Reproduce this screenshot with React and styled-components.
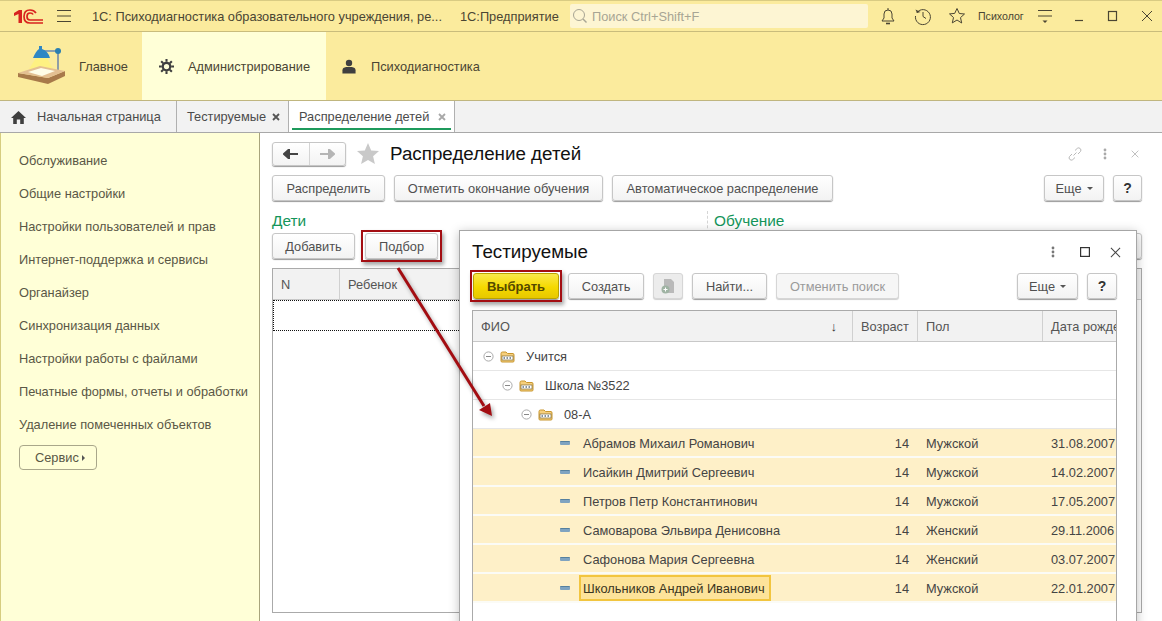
import React from "react";
import styled, { createGlobalStyle } from "styled-components";

const Global = createGlobalStyle`
  html, body { margin: 0; padding: 0; background: #fff; }
  body { font-family: "Liberation Sans", Arial, sans-serif; font-size: 12.8px; color: #4b4b4b; }
  * { box-sizing: border-box; }
`;

const Page = styled.div`
  width: 1162px; height: 621px; overflow: hidden; position: relative;
  display: flex; flex-direction: column; background: #fff;
`;

/* ---- top bar ---- */
const TopBar = styled.header`
  height: 32px; flex: none; display: flex; align-items: center;
  background: #fbeb9d; border-top: 1px solid #d9cb83; border-bottom: 1px solid #c9bc7c;
  color: #4a4533;
`;
const Logo = styled.svg`width: 32px; height: 20px; margin-left: 12px; flex: none;`;
const Burger = styled.svg`width: 18px; height: 16px; margin-left: 11px; flex: none;`;
const AppTitle = styled.span`margin-left: 19px; width: 355px; flex: none; white-space: nowrap; overflow: hidden; text-overflow: ellipsis;`;
const AppName = styled.span`margin-left: 13px; width: 97px; flex: none; white-space: nowrap;`;
const SearchBox = styled.div`
  margin-left: 13px; width: 298px; height: 24px; flex: none; border-radius: 2px; background: #fdf5d3;
  display: flex; align-items: center; gap: 4px; padding-left: 2px; color: #a8a594;
`;
const TopIcon = styled.svg`width: 20px; height: 20px; flex: none; margin-left: ${p => p.$gap}px;`;
const UserName = styled.span`margin-left: 11px; width: 47px; flex: none; font-size: 10.6px; white-space: nowrap;`;

/* ---- sections ---- */
const SectionBar = styled.nav`
  height: 69px; flex: none; display: flex; background: #fbeb9d; border-bottom: 1px solid #c0b67f;
`;
const Section = styled.div`
  display: flex; align-items: center; height: 100%; flex: none; width: ${p => p.$w}px;
  padding: 1px 0 0 ${p => p.$pad}px; gap: ${p => p.$gap}px;
  background: ${p => (p.$active ? "#ffffd7" : "transparent")}; color: #4a4533;
`;
const SectionIcon = styled.svg`flex: none; width: ${p => p.$w}px; height: ${p => p.$h}px;`;

/* ---- tabs ---- */
const TabBar = styled.div`
  height: 32px; flex: none; display: flex; background: #f2f2f2; border-bottom: 1px solid #a8a8a8;
`;
const Tab = styled.div`
  position: relative; height: 31px; flex: none; width: ${p => p.$w}px; display: flex; align-items: center;
  padding-left: ${p => p.$pad}px; border-right: 1px solid #b0b0b0; white-space: nowrap; color: #4b4b4b;
  background: ${p => (p.$current ? "#fff" : "transparent")};
  ${p => p.$current && `&::after { content: ""; position: absolute; left: 3px; right: 3px; bottom: 2px; height: 2px; background: #1e9a5c; }`}
`;
const TabClose = styled.svg`
  margin-left: auto; margin-right: 8px; width: 8px; height: 8px; flex: none;
  color: ${p => (p.$dim ? "#a8a8a8" : "#555")};
`;
const HomeIcon = styled.svg`width: 15px; height: 14px; margin-right: 11px; flex: none;`;

/* ---- workspace ---- */
const Body = styled.div`flex: 1; min-height: 0; display: flex;`;
const Sidebar = styled.aside`
  width: 260px; flex: none; background: #ffffd7; border-left: 1px solid #d6cd80; border-right: 1px solid #a8a47c;
  padding: 11px 0 0 18px; display: flex; flex-direction: column; align-items: flex-start;
`;
const SideItem = styled.div`height: 33px; line-height: 33px; color: #5a5746; white-space: nowrap;`;
const ServiceBtn = styled.div`
  margin-top: 4px; width: 78px; height: 25px; border: 1px solid #a9a78a; border-radius: 4px; color: #5a5746;
  display: flex; align-items: center; padding-left: 15px; gap: 3px;
  &::after { content: ""; border-left: 3px solid #555; border-top: 3px solid transparent; border-bottom: 3px solid transparent; }
`;
const Form = styled.main`
  flex: 1; min-width: 0; padding: 9px 20px 8px 12px; display: flex; flex-direction: column;
`;
const FormHead = styled.div`display: flex; align-items: center; height: 24px;`;
const NavGroup = styled.div`
  width: 74px; height: 24px; display: flex; border: 1px solid #c6c6c6; border-radius: 3px;
  box-shadow: 0 1px 1px #999; background: linear-gradient(#fff, #f3f3f3);
`;
const NavCell = styled.div`
  flex: 1; display: flex; align-items: center; justify-content: center;
  color: ${p => (p.$dim ? "#b5b5b5" : "#444")};
  & + & { border-left: 1px solid #d4d4d4; }
`;
const StarIcon = styled.svg`width: 24px; height: 24px; margin-left: 10px; flex: none;`;
const FormTitle = styled.h1`
  margin: 0 0 0 10px; font-size: 18.8px; font-weight: normal; color: #111; white-space: nowrap;
`;
const HeadTools = styled.div`margin-left: auto; display: flex; align-items: center; padding-right: 3px;`;
const LinkIcon = styled.svg`width: 16px; height: 16px; flex: none;`;
const ToolSlot = styled.div`display: flex; align-items: center; margin-left: ${p => p.$gap}px;`;
const Toolbar = styled.div`display: flex; align-items: center; gap: ${p => p.$gap || 9}px; flex: none;`;
const MainBar = styled(Toolbar)`margin-top: 9px;`;
const Spacer = styled.div`flex: 1;`;

const Btn = styled.button`
  position: relative; height: 26px; width: ${p => p.$w}px; flex: none; padding: 0; margin: 0;
  font: inherit; white-space: nowrap; border-radius: 3px;
  border: 1px solid ${p => (p.$disabled ? "#d6d6d6" : "#c6c6c6")};
  color: ${p => (p.$disabled ? "#9a9a9a" : "#505050")};
  background: linear-gradient(#ffffff, #f3f3f3);
  box-shadow: 0 1px 1px ${p => (p.$disabled ? "#cfcfcf" : "#9a9a9a")};
  ${p => p.$disabled && "background: #f6f6f6;"}
  display: flex; align-items: center; justify-content: center; gap: 5px;
`;
const DropMark = styled.i`
  border-top: 3px solid #555; border-left: 3px solid transparent; border-right: 3px solid transparent;
`;
const HelpBtn = styled(Btn)`font-weight: bold; font-size: 14px; color: #333;`;
const PrimaryBtn = styled(Btn)`
  font-weight: bold; font-size: 13px; color: #544800; border-color: #b9a300;
  background: linear-gradient(#f9e84a, #f5d900 55%, #e7c800);
`;
const Marked = styled.div`
  position: relative; flex: none; display: flex;
  &::after {
    content: ""; position: absolute; left: ${p => p.$x}px; right: ${p => p.$x}px; top: -3px; bottom: -3px;
    border: 2px solid #a30d12; pointer-events: none;
    box-shadow: 2px 3px 4px rgba(0, 0, 0, .35);
  }
`;

const Columns = styled.div`
  flex: 1; min-height: 0; display: grid; grid-template-columns: 442px 1fr; margin-top: 10px;
`;
const Column = styled.section`display: flex; flex-direction: column; min-width: 0;`;
const GroupHead = styled.div`
  height: 22px; font-size: 15.4px; line-height: 20px; color: #14955a;
  ${p => p.$divided && "border-left: 1px dashed #d5d5d5; padding-left: 6px; margin-left: -7px;"}
`;
const SubBar = styled(Toolbar)`margin-bottom: 9px;`;

const Grid = styled.div`
  flex: 1; min-height: 0; border: 1px solid #aaa; overflow: hidden; background: #fff;
`;
const HeadRow = styled.div`
  display: grid; grid-template-columns: ${p => p.$cols}; height: ${p => p.$h}px;
  background: #f2f2f2; border-bottom: 1px solid #c8c8c8;
`;
const HeadCell = styled.div`
  display: flex; align-items: center; padding-left: 8px; white-space: nowrap; overflow: hidden; color: #555;
  & + & { border-left: 1px solid #d0d0d0; }
`;
const SortMark = styled.span`margin-left: auto; margin-right: 15px; color: #333; font-size: 13px;`;
const CurrentRow = styled.div`height: 31px; border: 1px dotted #111;`;

/* ---- dialog ---- */
const Dialog = styled.div`
  position: absolute; left: 459px; top: 230px; width: 678px; height: 400px; background: #fff;
  border: 1px solid #a6a6a6; box-shadow: 0 2px 10px rgba(0, 0, 0, .25);
  padding: 0 19px 0 12px; display: flex; flex-direction: column;
`;
const DialogHead = styled.div`height: 42px; display: flex; align-items: center; flex: none;`;
const DialogTitle = styled.h2`margin: 0; font-size: 18.8px; font-weight: normal; color: #111;`;
const DialogTools = styled.div`margin-left: auto; margin-right: -4px; display: flex; align-items: center;`;
const DialogBar = styled(Toolbar)`padding-left: 1px;`;
const IconBtn = styled(Btn)`background: #ececec;`;
const TreeGrid = styled.div`
  margin-top: 11px; flex: 1; min-height: 0; border: 1px solid #aaa; border-bottom: none; overflow: hidden;
`;
const TreeRow = styled.div`
  display: grid; grid-template-columns: 379px 65px 125px 75px; height: 29px; align-items: center;
  padding-top: 1px;
  background: ${p => (p.$picked ? "#fef0c8" : "#fff")};
  border-bottom: ${p => (p.$picked ? "2px solid #fbfbf6" : "1px solid #e6e6e6")};
  color: #444; white-space: nowrap;
`;
const NameCell = styled.div`
  display: flex; align-items: center; height: 100%; padding-left: ${p => p.$indent}px;
`;
const Toggle = styled.svg`width: 11px; height: 11px; flex: none; margin-right: 6px;`;
const Folder = styled.svg`width: 15px; height: 12px; flex: none; margin-right: 11px;`;
const LeafMark = styled.span`
  width: 10px; height: 4px; flex: none; margin-right: 13px; background: #7fa3c0; border-top: 1px solid #55809f; border-radius: 1px;
`;
const CurrentName = styled.span`
  margin-left: -4px; height: 26px; width: 192px; padding-left: 2px; display: flex; align-items: center;
  background: #fde39a; border: 2px solid #f2c53f; color: #3a3520;
`;
const Age = styled.div`text-align: right; padding-right: 8px;`;
const Plain = styled.div`padding-left: 9px; overflow: hidden;`;

const ArrowLayer = styled.svg`
  position: absolute; left: 380px; top: 255px; width: 130px; height: 175px; pointer-events: none;
  filter: drop-shadow(2px 3px 2px rgba(0, 0, 0, .35));
`;

const people = [
  ["Абрамов Михаил Романович", "Мужской", "31.08.2007"],
  ["Исайкин Дмитрий Сергеевич", "Мужской", "14.02.2007"],
  ["Петров Петр Константинович", "Мужской", "17.05.2007"],
  ["Самоварова Эльвира Денисовна", "Женский", "29.11.2006"],
  ["Сафонова Мария Сергеевна", "Женский", "03.07.2007"],
  ["Школьников Андрей Иванович", "Мужской", "22.01.2007"],
];
const groups = [["Учится", 10], ["Школа №3522", 29], ["08-А", 48]];
const sideItems = [
  "Обслуживание", "Общие настройки", "Настройки пользователей и прав", "Интернет-поддержка и сервисы",
  "Органайзер", "Синхронизация данных", "Настройки работы с файлами", "Печатные формы, отчеты и обработки",
  "Удаление помеченных объектов",
];

const FolderGlyph = () => (
  <Folder viewBox="0 0 15 12">
    <path d="M1 2.5Q1 1 2.5 1H6l1.5 1.5H13Q14 2.5 14 4V10Q14 11 13 11H2Q1 11 1 10Z" fill="#f6cf7c" stroke="#c8962e" />
    <rect x="2" y="5" width="11" height="4" fill="#fff" stroke="#7d6a3a" strokeWidth=".7" />
    <path d="M3.5 7h1.5M6.5 7H8M9.5 7H11" stroke="#5d6f7d" strokeWidth="1.4" />
  </Folder>
);
const ToggleGlyph = () => (
  <Toggle viewBox="0 0 11 11">
    <circle cx="5.5" cy="5.5" r="4.6" fill="none" stroke="#aaa" />
    <path d="M3 5.5h5" stroke="#888" />
  </Toggle>
);
const MiniCross = ({ size, color }) => (
  <svg width={size} height={size} viewBox="0 0 12 12">
    <path d="M1 1l10 10M11 1L1 11" stroke={color} strokeWidth="1.1" fill="none" />
  </svg>
);
const Dots = ({ color }) => (
  <svg width="4" height="12" viewBox="0 0 4 12">
    <circle cx="2" cy="2" r="1.4" fill={color} /><circle cx="2" cy="6" r="1.4" fill={color} /><circle cx="2" cy="10" r="1.4" fill={color} />
  </svg>
);
const CloseGlyph = ({ dim }) => (
  <TabClose $dim={dim} viewBox="0 0 8 8">
    <path d="M1 1l6 6M7 1L1 7" stroke="currentColor" strokeWidth="1.8" />
  </TabClose>
);

export default function App() {
  return (
    <Page>
      <Global />
      <TopBar>
        <Logo viewBox="12 6 32 20">
          <path d="M14 13L19 10H22V23H18.5V14L14 16Z" fill="#d8231f" />
          <path d="M36 13Q34 10 30 10Q24 10 24 16.5Q24 23 30 23H43" fill="none" stroke="#d8231f" strokeWidth="1.7" />
          <path d="M33 14.5Q32.5 13 30 13Q27 13 27 16.5Q27 20 30 20H43" fill="none" stroke="#d8231f" strokeWidth="1.7" />
        </Logo>
        <Burger viewBox="0 0 18 16">
          <path d="M2 2.5H16M2 8H16M2 13.5H16" stroke="#4a4533" strokeWidth="1" />
        </Burger>
        <AppTitle>1С: Психодиагностика образовательного учреждения, ре...</AppTitle>
        <AppName>1С:Предприятие</AppName>
        <SearchBox>
          <svg width="16" height="16" viewBox="0 0 16 16">
            <circle cx="7" cy="7" r="5.5" fill="none" stroke="#a8a594" />
            <path d="M11 11l3.5 3.5" stroke="#a8a594" strokeWidth="1.4" />
          </svg>
          Поиск Ctrl+Shift+F
        </SearchBox>
        <TopIcon $gap={10} viewBox="0 0 20 20">
          <path d="M4 15h12l-2-3V8a4 4 0 0 0-8 0v4Z" fill="none" stroke="#4a4533" />
          <path d="M8 17.5h4" stroke="#4a4533" strokeWidth="1.6" /><path d="M10 2v2" stroke="#4a4533" />
        </TopIcon>
        <TopIcon $gap={15} viewBox="0 0 20 20">
          <path d="M4 6.5A7.5 7.5 0 1 1 2.5 10" fill="none" stroke="#4a4533" />
          <path d="M2.5 3.5L4 7l3.5-1Z" fill="#4a4533" /><path d="M10 6v4.5l3 2" fill="none" stroke="#4a4533" />
        </TopIcon>
        <TopIcon $gap={14} viewBox="0 0 20 20">
          <path d="M10 2.5l2.3 5 5.2.5-4 3.6 1.2 5.4L10 14l-4.7 2.9 1.2-5.4-4-3.6 5.2-.5Z" fill="none" stroke="#4a4533" />
        </TopIcon>
        <UserName>Психолог</UserName>
        <TopIcon $gap={10} viewBox="0 0 20 20">
          <path d="M3 4.5H17M3 10H17" stroke="#4a4533" /><path d="M7.5 14.5h5l-2.5 2.5Z" fill="#4a4533" />
        </TopIcon>
        <TopIcon $gap={14} viewBox="0 0 20 20"><path d="M6 14.5H14" stroke="#4a4533" strokeWidth="1.2" /></TopIcon>
        <TopIcon $gap={14} viewBox="0 0 20 20"><rect x="5.5" y="5.5" width="8" height="9" fill="none" stroke="#4a4533" strokeWidth="1.2" /></TopIcon>
        <TopIcon $gap={14} viewBox="0 0 20 20"><path d="M5 5l10 10M15 5L5 15" stroke="#4a4533" /></TopIcon>
      </TopBar>

      <SectionBar>
        <Section $w={142} $pad={17} $gap={14}>
          <SectionIcon $w={48} $h={48} viewBox="17 43 48 48">
            <path d="M36 58L29 69H53L47 58Z" fill="#fff37a" opacity=".75" />
            <path d="M44 51H58" stroke="#8ca0ae" strokeWidth="2" />
            <path d="M58 52V70" stroke="#8f9da6" strokeWidth="2" />
            <circle cx="58" cy="51" r="3" fill="#2b7fb0" />
            <path d="M33 58Q36 51 39 49V46H42V49Q48 51 50 58Z" fill="#2f87c4" />
            <path d="M18 73V77L48 84L65 76V71L48 78Z" fill="#a87a4a" />
            <path d="M18 73L40 66L65 71L48 78Z" fill="#e3bf92" />
            <path d="M28 72L41 68L55 71L42 76Z" fill="#fffde8" />
          </SectionIcon>
          Главное
        </Section>
        <Section $w={184} $pad={17} $gap={14} $active>
          <SectionIcon $w={15} $h={15} viewBox="0 0 16 16">
            <circle cx="8" cy="8" r="4" fill="none" stroke="#3f3f3f" strokeWidth="2.4" />
            <path d="M8 0v3M8 13v3M0 8h3M13 8h3M2.3 2.3l2.2 2.2M11.5 11.5l2.2 2.2M13.7 2.3l-2.2 2.2M4.5 11.5l-2.2 2.2" stroke="#3f3f3f" strokeWidth="2.2" />
          </SectionIcon>
          Администрирование
        </Section>
        <Section $w={170} $pad={16} $gap={15}>
          <SectionIcon $w={14} $h={15} viewBox="0 0 14 16">
            <circle cx="7" cy="4.2" r="3.4" fill="#3f3f3f" />
            <path d="M0 15.5V12q0-3 4-3.5h6q4 .5 4 3.5v3.5Z" fill="#3f3f3f" />
          </SectionIcon>
          Психодиагностика
        </Section>
      </SectionBar>

      <TabBar>
        <Tab $w={177} $pad={11}>
          <HomeIcon viewBox="0 0 15 14">
            <path d="M7.5 1L0 8h2.2v6h3.6V9.5h3.4V14h3.6V8H15Z" fill="#3f3f3f" />
          </HomeIcon>
          Начальная страница
        </Tab>
        <Tab $w={112} $pad={10}>Тестируемые<CloseGlyph /></Tab>
        <Tab $w={166} $pad={10} $current>Распределение детей<CloseGlyph dim /></Tab>
      </TabBar>

      <Body>
        <Sidebar>
          {sideItems.map(t => <SideItem key={t}>{t}</SideItem>)}
          <ServiceBtn>Сервис</ServiceBtn>
        </Sidebar>
        <Form>
          <FormHead>
            <NavGroup>
              <NavCell><svg width="16" height="10" viewBox="0 0 16 10"><path d="M1 5h14M6 .5L1 5l5 4.5Z" stroke="currentColor" strokeWidth="2" fill="currentColor" /></svg></NavCell>
              <NavCell $dim><svg width="16" height="10" viewBox="0 0 16 10"><path d="M1 5h14M10 .5L15 5l-5 4.5Z" stroke="currentColor" strokeWidth="2" fill="currentColor" /></svg></NavCell>
            </NavGroup>
            <StarIcon viewBox="0 0 24 24"><path d="M12 1l3.2 7.4 7.8.7-5.9 5.2 1.8 7.7L12 18l-6.9 4 1.8-7.7L1 9.1l7.8-.7Z" fill="#c9c9c9" /></StarIcon>
            <FormTitle>Распределение детей</FormTitle>
            <HeadTools>
              <LinkIcon viewBox="0 0 16 16"><path d="M6.5 9.5l3-3M5 8l-2.5 2.5a2.3 2.3 0 0 0 3.2 3.2L8 11.5M8 4.5l2.3-2.2a2.3 2.3 0 0 1 3.2 3.2L11 8" fill="none" stroke="#b9b9b9" /></LinkIcon>
              <ToolSlot $gap={20}><Dots color="#a9a9a9" /></ToolSlot>
              <ToolSlot $gap={24}><MiniCross size={8} color="#a9a9a9" /></ToolSlot>
            </HeadTools>
          </FormHead>
          <MainBar>
            <Btn $w={113}>Распределить</Btn>
            <Btn $w={209}>Отметить окончание обучения</Btn>
            <Btn $w={221}>Автоматическое распределение</Btn>
            <Spacer />
            <Btn $w={60}>Еще<DropMark /></Btn>
            <HelpBtn $w={29}>?</HelpBtn>
          </MainBar>
          <Columns>
            <Column>
              <GroupHead>Дети</GroupHead>
              <SubBar $gap={10}>
                <Btn $w={83}>Добавить</Btn>
                <Marked $x={-4}><Btn $w={73}>Подбор</Btn></Marked>
              </SubBar>
              <Grid>
                <HeadRow $cols="66px 1fr" $h={31}>
                  <HeadCell>N</HeadCell>
                  <HeadCell>Ребенок</HeadCell>
                </HeadRow>
                <CurrentRow />
              </Grid>
            </Column>
            <Column>
              <GroupHead $divided>Обучение</GroupHead>
              <SubBar>
                <Spacer />
                <Btn $w={83} />
              </SubBar>
              <Grid>
                <HeadRow $cols="1fr" $h={31}><HeadCell /></HeadRow>
              </Grid>
            </Column>
          </Columns>
        </Form>
      </Body>

      <Dialog>
        <DialogHead>
          <DialogTitle>Тестируемые</DialogTitle>
          <DialogTools>
            <Dots color="#777" />
            <ToolSlot $gap={25}><svg width="10" height="10" viewBox="0 0 10 10"><rect x=".6" y=".6" width="8.8" height="8.8" fill="none" stroke="#333" strokeWidth="1.2" /></svg></ToolSlot>
            <ToolSlot $gap={20}><MiniCross size={11} color="#444" /></ToolSlot>
          </DialogTools>
        </DialogHead>
        <DialogBar>
          <Marked $x={-3}><PrimaryBtn $w={86}>Выбрать</PrimaryBtn></Marked>
          <Btn $w={76}>Создать</Btn>
          <IconBtn $w={30} $disabled>
            <svg width="14" height="16" viewBox="0 0 14 16">
              <path d="M3 1h7l3 3v11H3Z" fill="#b9b9b9" />
              <circle cx="4.5" cy="11.5" r="4" fill="#9fb3a3" />
              <path d="M2.5 11.5h4M4.5 9.5v4" stroke="#fff" />
            </svg>
          </IconBtn>
          <Btn $w={75}>Найти...</Btn>
          <Btn $w={123} $disabled>Отменить поиск</Btn>
          <Spacer />
          <Btn $w={61}>Еще<DropMark /></Btn>
          <HelpBtn $w={30}>?</HelpBtn>
        </DialogBar>
        <TreeGrid>
          <HeadRow $cols="379px 65px 125px 75px" $h={31}>
            <HeadCell>ФИО<SortMark>↓</SortMark></HeadCell>
            <HeadCell>Возраст</HeadCell>
            <HeadCell>Пол</HeadCell>
            <HeadCell>Дата рождения</HeadCell>
          </HeadRow>
          {groups.map(([name, indent]) => (
            <TreeRow key={name}>
              <NameCell $indent={indent}><ToggleGlyph /><FolderGlyph />{name}</NameCell>
            </TreeRow>
          ))}
          {people.map(([name, sex, date], i) => (
            <TreeRow key={name} $picked>
              <NameCell $indent={87}>
                <LeafMark />
                {i === people.length - 1 ? <CurrentName>{name}</CurrentName> : name}
              </NameCell>
              <Age>14</Age>
              <Plain>{sex}</Plain>
              <Plain>{date}</Plain>
            </TreeRow>
          ))}
        </TreeGrid>
      </Dialog>

      <ArrowLayer viewBox="0 0 130 175">
        <path d="M18 13L104 151" stroke="#a30d12" strokeWidth="3" fill="none" />
        <path d="M112 161L99 155L110 148Z" fill="#a30d12" />
      </ArrowLayer>
    </Page>
  );
}
